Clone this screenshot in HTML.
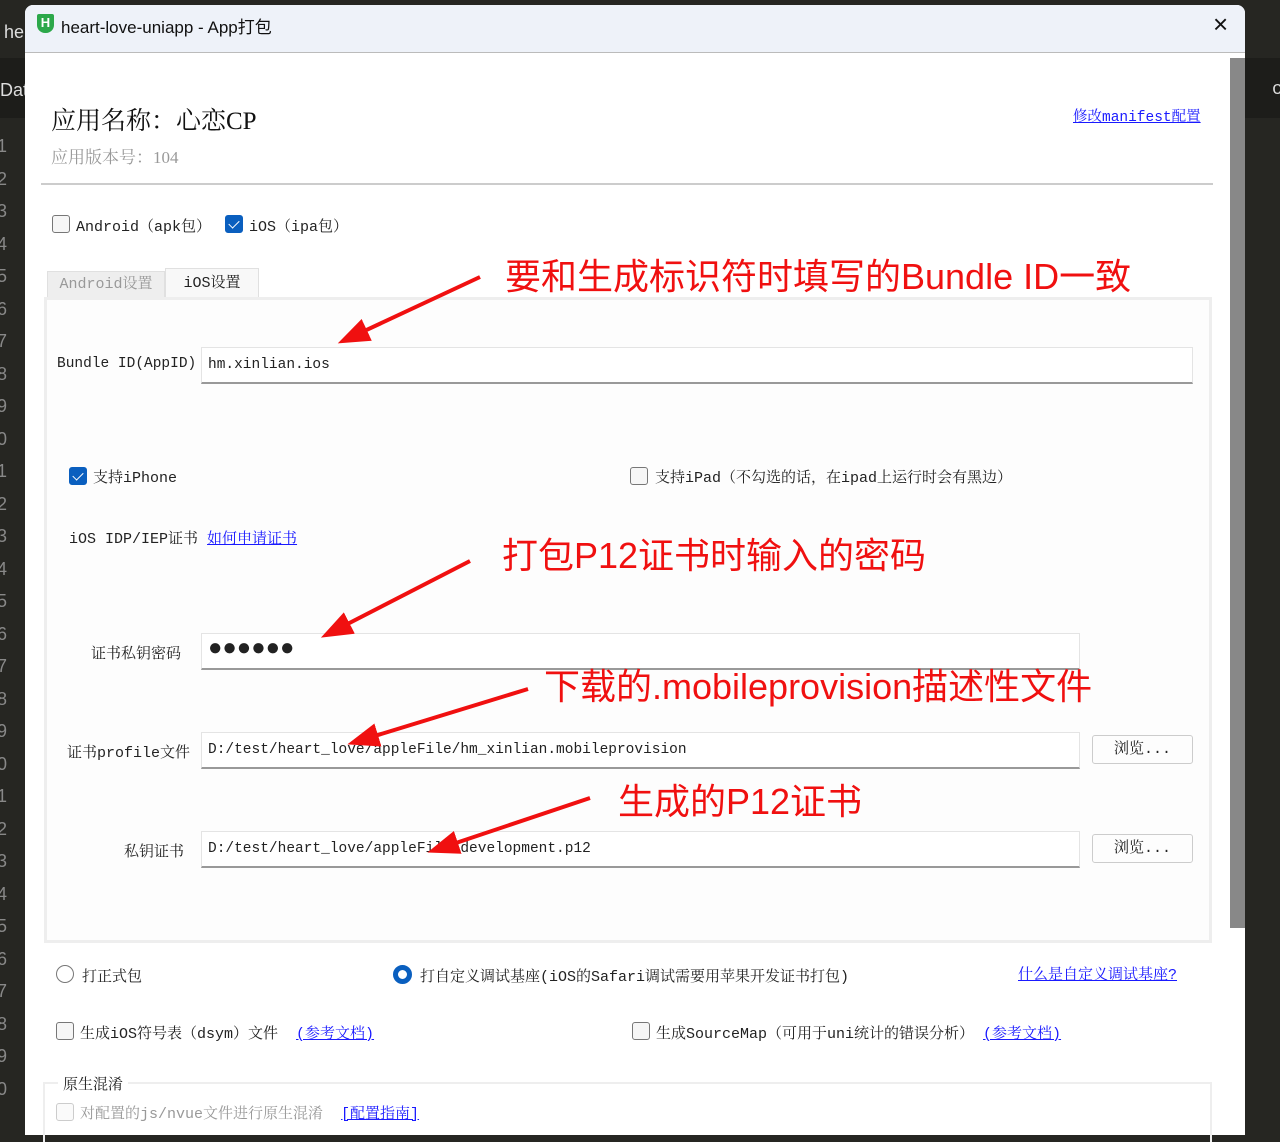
<!DOCTYPE html>
<html><head><meta charset="utf-8"><style>
*{box-sizing:border-box;margin:0;padding:0}
body{width:1280px;height:1129px;background:#262622;position:relative;overflow:hidden;font-family:"Liberation Mono","Noto Serif CJK SC",monospace;font-size:15px;color:#222}
.abs{position:absolute}
.dlg{left:25px;top:5px;width:1220px;height:1130px;background:#fff;border-radius:8px 8px 0 0;overflow:hidden}
.tb{left:0;top:0;width:1220px;height:48px;background:#eef2f9;border-bottom:1px solid #bbb}
.cb{width:18px;height:18px;border:1px solid #777;border-radius:3px;background:#f6f6f6}
.cb.on{background:#0a5fbf;border-color:#0a5fbf}
.cb.on::after{content:"";position:absolute;left:5px;top:2px;width:5px;height:9px;border:solid #fff;border-width:0 1.5px 1.5px 0;transform:rotate(45deg)}
.inp{background:#fff;border:1px solid #e4e4e4;border-bottom:2px solid #999;height:37px;padding:9px 6px;font-size:14.5px}
.btn{width:101px;height:29px;border:1px solid #ccc;border-radius:3px;background:#fdfdfd;text-align:center;line-height:27px;font-size:15px}
a{color:#1a1aff;text-decoration:underline}
.red{color:#f01010;font-family:"Liberation Sans","Noto Sans CJK SC",sans-serif;font-size:36px;white-space:nowrap}
.lbl{white-space:nowrap}
</style></head><body>
<div class="abs" style="left:0;top:0;width:30px;height:1129px;background:#262622"></div>
<div class="abs" style="left:4px;top:22px;color:#ddd;font-family:'Liberation Sans',sans-serif;font-size:18px">he</div>
<div class="abs" style="left:0;top:58px;width:1280px;height:60px;background:#1d1d1a"></div>
<div class="abs" style="left:0;top:80px;color:#ddd;font-family:'Liberation Sans',sans-serif;font-size:18px">Dat</div>
<div class="abs" style="left:-3px;top:130px;color:#888;font-family:'Liberation Sans',sans-serif;font-size:18px;line-height:32.5px;width:10px;overflow:hidden">1<br>2<br>3<br>4<br>5<br>6<br>7<br>8<br>9<br>0<br>1<br>2<br>3<br>4<br>5<br>6<br>7<br>8<br>9<br>0<br>1<br>2<br>3<br>4<br>5<br>6<br>7<br>8<br>9<br>0</div>
<div class="abs" style="left:1272px;top:80px;color:#ddd;font-size:18px">c</div>
<div class="abs dlg">
 <div class="abs tb"></div>
 <div class="abs" style="left:12px;top:9px;width:17px;height:19px;background:#2ca84a;border-radius:2px 2px 8px 8px;color:#fff;font:bold 13px 'Liberation Sans';text-align:center;line-height:18px">H</div>
 <div class="abs" style="left:36px;top:8px;font-family:'Liberation Sans','Noto Sans CJK SC',sans-serif;font-size:17px;color:#111">heart-love-uniapp - App打包</div>
 <div class="abs" style="left:1188px;top:4px;font-family:'Liberation Sans';font-size:26px;color:#111">×</div>
 <div class="abs" style="left:1205px;top:53px;width:15px;height:870px;background:#888"></div>
</div>
<div class="abs lbl" style="left:51px;top:101px;font-size:25px;font-family:'Liberation Serif','Noto Serif CJK SC',serif;color:#111">应用名称：心恋CP</div>
<div class="abs lbl" style="left:51px;top:143px;font-size:17px;color:#999;font-family:'Liberation Serif','Noto Serif CJK SC',serif">应用版本号：104</div>
<a class="abs lbl" style="left:1073px;top:105px;font-size:14.5px">修改manifest配置</a>
<div class="abs" style="left:41px;top:183px;width:1172px;height:2px;background:#ccc"></div>
<div class="abs cb" style="left:52px;top:215px"></div>
<div class="abs lbl" style="left:76px;top:215px">Android（apk包）</div>
<div class="abs cb on" style="left:225px;top:215px"></div>
<div class="abs lbl" style="left:249px;top:215px">iOS（ipa包）</div>
<div class="abs" style="left:47px;top:271px;width:118px;height:27px;background:#eee;border:1px solid #e0e0e0;color:#999;text-align:center;line-height:26px">Android设置</div>
<div class="abs" style="left:165px;top:268px;width:94px;height:30px;background:#f8f8f8;border:1px solid #e0e0e0;border-bottom:none;text-align:center;line-height:30px">iOS设置</div>
<div class="abs" style="left:44px;top:297px;width:1168px;height:646px;border:3px solid #eee;background:#fdfdfd"></div>
<div class="abs lbl" style="left:57px;top:356px;font-size:14.5px">Bundle ID(AppID)</div>
<div class="abs inp" style="left:201px;top:347px;width:992px">hm.xinlian.ios</div>
<div class="abs cb on" style="left:69px;top:467px"></div>
<div class="abs lbl" style="left:93px;top:466px">支持iPhone</div>
<div class="abs cb" style="left:630px;top:467px"></div>
<div class="abs lbl" style="left:655px;top:466px">支持iPad（不勾选的话，在ipad上运行时会有黑边）</div>
<div class="abs lbl" style="left:69px;top:527px">iOS IDP/IEP证书 <a>如何申请证书</a></div>
<div class="abs lbl" style="left:91px;top:642px">证书私钥密码</div>
<div class="abs inp" style="left:201px;top:633px;width:879px;font-size:24px;padding:2px 6px;letter-spacing:0px">●●●●●●</div>
<div class="abs lbl" style="left:67px;top:741px">证书profile文件</div>
<div class="abs inp" style="left:201px;top:732px;width:879px">D:/test/heart_love/appleFile/hm_xinlian.mobileprovision</div>
<div class="abs btn" style="left:1092px;top:735px">浏览...</div>
<div class="abs lbl" style="left:124px;top:840px">私钥证书</div>
<div class="abs inp" style="left:201px;top:831px;width:879px">D:/test/heart_love/appleFile/development.p12</div>
<div class="abs btn" style="left:1092px;top:834px">浏览...</div>
<div class="abs" style="left:56px;top:965px;width:18px;height:18px;border:1.5px solid #777;border-radius:50%"></div>
<div class="abs lbl" style="left:82px;top:965px">打正式包</div>
<div class="abs" style="left:393px;top:965px;width:19px;height:19px;border:5px solid #0a5fbf;border-radius:50%"></div>
<div class="abs lbl" style="left:420px;top:965px">打自定义调试基座(iOS的Safari调试需要用苹果开发证书打包)</div>
<a class="abs lbl" style="left:1018px;top:963px">什么是自定义调试基座?</a>
<div class="abs cb" style="left:56px;top:1022px"></div>
<div class="abs lbl" style="left:80px;top:1022px">生成iOS符号表（dsym）文件 &nbsp;<a>(参考文档)</a></div>
<div class="abs cb" style="left:632px;top:1022px"></div>
<div class="abs lbl" style="left:656px;top:1022px">生成SourceMap（可用于uni统计的错误分析） <a>(参考文档)</a></div>
<div class="abs" style="left:43px;top:1082px;width:1169px;height:60px;border:2px solid #eee;border-bottom:none"></div>
<div class="abs lbl" style="left:58px;top:1073px;background:#fff;padding:0 5px">原生混淆</div>
<div class="abs cb" style="left:56px;top:1103px;border-color:#ccc;background:#fafafa"></div>
<div class="abs lbl" style="left:80px;top:1102px;color:#999">对配置的js/nvue文件进行原生混淆 &nbsp;<a>[配置指南]</a></div>
<div class="abs red" style="left:505px;top:248px">要和生成标识符时填写的Bundle ID一致</div>
<div class="abs red" style="left:502px;top:527px">打包P12证书时输入的密码</div>
<div class="abs red" style="left:544px;top:658px">下载的.mobileprovision描述性文件</div>
<div class="abs red" style="left:618px;top:773px">生成的P12证书</div>
<svg class="abs" style="left:0;top:0" width="1280" height="1129">
<defs><marker id="m" markerWidth="8" markerHeight="6" refX="6" refY="3" orient="auto"><path d="M0,0L8,3L0,6z" fill="#f01010"/></marker></defs>
<g stroke="#f01010" stroke-width="4" marker-end="url(#m)" fill="none">
<line x1="480" y1="277" x2="345" y2="340"/>
<line x1="470" y1="561" x2="328" y2="634"/>
<line x1="528" y1="689" x2="355" y2="742"/>
<line x1="590" y1="798" x2="435" y2="850"/>
</g></svg>
</body></html>
